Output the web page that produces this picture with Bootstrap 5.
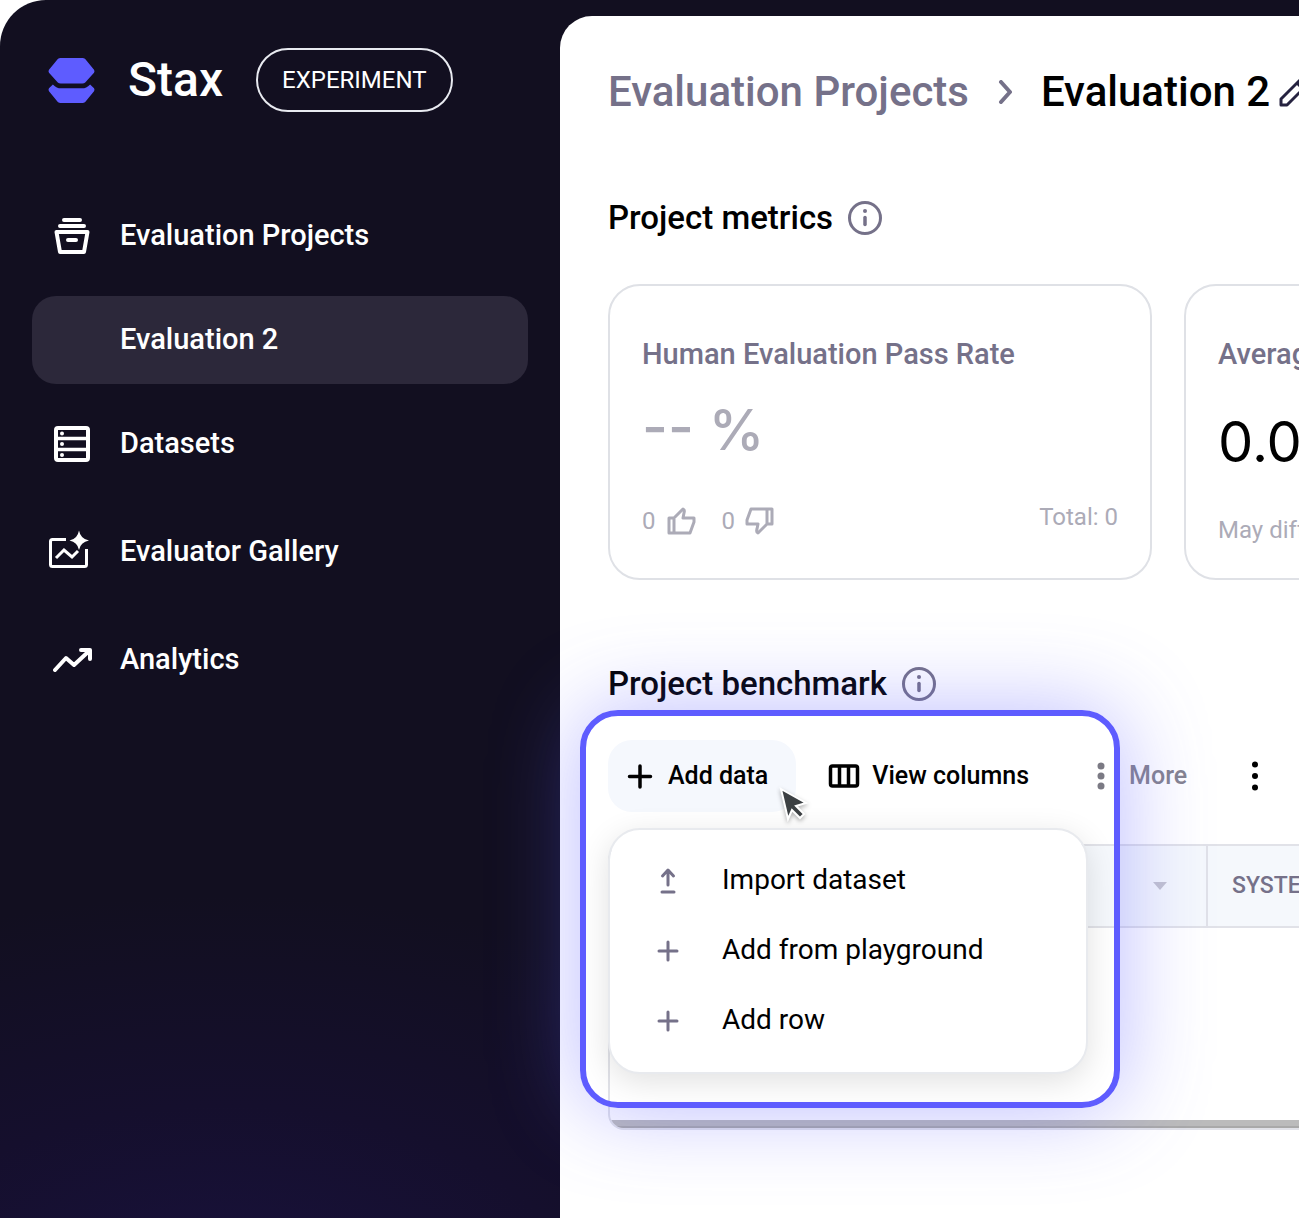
<!DOCTYPE html>
<html lang="en">
<head>
<meta charset="utf-8">
<meta name="viewport" content="width=device-width, initial-scale=1">
<title>Stax</title>
<link href="https://cdn.jsdelivr.net/npm/bootstrap@5.3.0/dist/css/bootstrap.min.css" rel="stylesheet">
<style>
  :root { --ink: #120f20; --muted: #757189; --faint: #acabb7; --accent: #5e5cff; --line: #dfe1e6; }
  body { font-family: Roboto, "Liberation Sans", sans-serif; color: #000; background: #fff; overflow-x: hidden; }
  svg { display: block; flex: none; }
  .app-shell { min-height: 100vh; background: var(--ink); border-top-left-radius: 46px; overflow: hidden; }
  .side-bar { width: 560px; padding: 48px 32px; color: #fff;
    background: radial-gradient(ellipse 720px 420px at 40% 108%, #19123e 0%, #150f2d 50%, rgba(18, 15, 32, 0) 100%); }
  .brand-row { height: 64px; margin: 0 16px 80px; gap: 33px; }
  .brand-name { font-size: 48px; line-height: 64px; font-weight: 500; }
  .stage-pill { height: 64px; padding: 0 24px; border: 2px solid #e8eaf0; font-size: 24px; font-weight: 400; line-height: 60px; }
  .side-link { height: 88px; padding: 0 16px; gap: 24px; border-radius: 24px; color: #fff; font-size: 29px; font-weight: 500; text-decoration: none; }
  .side-link.active { background: #2c283a; }
  .side-icon { width: 48px; }
  .nav-projects { gap: 16px; margin-bottom: 20px; }
  .nav-tools { gap: 20px; }
  .main-panel { margin-top: 16px; padding: 52px 0 88px 48px; background: #fff; border-top-left-radius: 32px; min-width: 0; }
  .crumbs { font-size: 42px; line-height: 48px; font-weight: 500; gap: 29px; margin-bottom: 82px; white-space: nowrap; }
  .crumbs a { color: var(--muted); text-decoration: none; }
  .section-title { font-size: 33px; line-height: 40px; font-weight: 500; margin: 0; }
  .section-head { gap: 14px; }
  .metric-row { gap: 32px; margin: 46px 0 84px; }
  .metric-card { flex: 0 0 544px; height: 296px; padding: 48px 32px 37px; border: 2px solid var(--line); border-radius: 32px; white-space: nowrap; }
  .metric-name { font-size: 29px; line-height: 40px; font-weight: 500; color: var(--muted); margin: 0; }
  .metric-value { font-family: Inter, Roboto, sans-serif; font-size: 56px; line-height: 64px; font-weight: 400; margin-top: 36px; }
  .metric-value.empty { margin-top: 24px; font-weight: 500; color: var(--faint); }
  .metric-foot { font-size: 24px; line-height: 32px; color: var(--faint); }
  .toolbar-zone { margin: 36px 0 32px; }
  .tool-row { gap: 16px; }
  .tool-btn { height: 72px; padding: 0 28px 0 16px; gap: 12px; border: 0; border-radius: 24px; font-size: 25px; font-weight: 500; line-height: 32px; color: #000; white-space: nowrap; }
  .tool-btn.pressed { background: #f5f8fd; }
  .tool-btn.quiet { padding: 0 20px 0 12px; color: #85838f; }
  .add-menu { display: block; top: 88px; left: 0; width: 480px; padding: 15px 0 17px; border: 2px solid #e8eaee; border-radius: 32px; box-shadow: 0 8px 32px rgba(0, 0, 0, .12); z-index: 3; }
  .add-menu .dropdown-item { height: 70px; padding: 0 44px; gap: 40px; font-size: 28px; color: #000; }
  .focus-frame { top: -30px; left: -28px; width: 540px; height: 398px; border: 6px solid var(--accent); border-radius: 38px; box-shadow: 0 0 88px rgba(94, 92, 255, .42); z-index: 4; pointer-events: none; }
  .pointer { top: 45px; left: 168px; z-index: 5; }
  .data-grid { width: 1000px; border: 2px solid #e1e2e8; border-radius: 16px; overflow: hidden; }
  .data-grid table { table-layout: fixed; margin: 0; border-collapse: separate; border-spacing: 0; }
  .data-grid th { height: 82px; padding: 0 24px; background: #f5f8fc; border-bottom: 2px solid #e1e2e8; color: var(--muted); font-size: 23px; font-weight: 500; vertical-align: middle; white-space: nowrap; }
  .data-grid th:first-child { width: 598px; padding-right: 38px; border-right: 2px solid #e1e2e8; }
  .data-grid td { height: 192px; border: 0; padding: 0; }
  .scroll-bar { height: 8px; background: #bbb; border-bottom: 2px solid #a9a9a9; }
</style>
</head>
<body>
<div class="app-shell d-flex">
  <aside class="side-bar flex-shrink-0">
    <div class="brand-row d-flex align-items-center">
      <svg width="47" height="47" viewBox="0 0 48 48" fill="#5e5cff"><path d="M13 1h22q2 0 3 1l9 11q1 1.500 0 3L38 26q-1 1-3 1H13q-2 0-3-1L1 16q-1-1.500 0-3L10 2q1-1 3-1zM5 28q4 4 8 4h22q4 0 8-4l4 4q1 1.500 0 3L38 46q-1 1-3 1H13q-2 0-3-1L1 35q-1-1.500 0-3z"/></svg>
      <span class="brand-name">Stax</span>
      <span class="stage-pill rounded-pill">EXPERIMENT</span>
    </div>
    <nav aria-label="Main">
      <div class="nav-projects d-flex flex-column">
        <a class="side-link d-flex align-items-center" href="#"><span class="side-icon d-flex justify-content-center">
          <svg width="36" height="36" viewBox="0 0 36 36" fill="none" stroke="#fff" stroke-width="4" stroke-linecap="round" stroke-linejoin="round"><path d="M10 2h16M6 8h24M2.500 14h31L30 34H6zM14 22h8"/></svg></span>Evaluation Projects</a>
        <a class="side-link active d-flex align-items-center" href="#" aria-current="page"><span class="side-icon"></span>Evaluation 2</a>
        <a class="side-link d-flex align-items-center" href="#"><span class="side-icon d-flex justify-content-center">
          <svg width="36" height="36" viewBox="0 0 36 36" fill="none" stroke="#fff" stroke-width="4"><rect x="2" y="2" width="32" height="32" rx="2"/><path d="M3 12.500h30M3 23.500h30" stroke-width="3.500"/><g fill="#fff" stroke="none"><circle cx="8" cy="7.500" r="2"/><circle cx="8" cy="18" r="2"/><circle cx="8" cy="29" r="2"/></g></svg></span>Datasets</a>
      </div>
      <div class="nav-tools d-flex flex-column">
        <a class="side-link d-flex align-items-center" href="#"><span class="side-icon">
          <svg width="48" height="48" viewBox="0 0 48 48" fill="none" stroke="#fff" stroke-width="3"><path d="M18 11.500H4.500q-2 0-2 2v23q0 2 2 2h32q2 0 2-2V21M8 30l8-8 8 7 6-6" stroke-linejoin="miter"/><path d="M31 2.500q1.500 8.500 10 10-8.500 1.500-10 9.500-1.500-8-9.500-9.500 8-1.500 9.500-10z" fill="#fff" stroke="none"/></svg></span>Evaluator Gallery</a>
        <a class="side-link d-flex align-items-center" href="#"><span class="side-icon d-flex justify-content-center">
          <svg width="40" height="24" viewBox="0 0 40 24" fill="none" stroke="#fff" stroke-width="4" stroke-linecap="round" stroke-linejoin="round"><path d="M3 22l11-12 8 7L36 4M29 2h9v9"/></svg></span>Analytics</a>
      </div>
    </nav>
  </aside>

  <main class="main-panel flex-grow-1">
    <nav class="crumbs d-flex align-items-center" aria-label="Breadcrumb">
      <a href="#">Evaluation Projects</a>
      <svg width="14" height="24" viewBox="0 0 14 24" fill="none" stroke="#757189" stroke-width="4" stroke-linecap="round" stroke-linejoin="round"><path d="M3 2l9 10-9 10"/></svg>
      <span class="d-flex align-items-center gap-2">Evaluation 2
        <svg width="32" height="32" viewBox="0 0 32 32" fill="none" stroke="#262340" stroke-width="3" stroke-linejoin="round"><path d="M3 29v-6L23 3l6 6L9 29zM19 7l6 6"/></svg></span>
    </nav>

    <div class="section-head d-flex align-items-center">
      <h2 class="section-title">Project metrics</h2>
      <svg width="36" height="36" viewBox="0 0 36 36"><circle cx="18" cy="18" r="15.500" fill="none" stroke="#757189" stroke-width="3"/><circle cx="18" cy="11" r="2" fill="#757189"/><path d="M18 17.500v7" stroke="#757189" stroke-width="3.500" stroke-linecap="round"/></svg>
    </div>
    <div class="metric-row d-flex">
      <section class="metric-card d-flex flex-column">
        <h3 class="metric-name">Human Evaluation Pass Rate</h3>
        <div class="metric-value empty">-- %</div>
        <div class="metric-foot d-flex align-items-center mt-auto">
          <span>0</span>
          <svg class="ms-2 me-4" width="34" height="34" viewBox="0 0 34 34" fill="none" stroke="#acabb7" stroke-width="3" stroke-linejoin="round"><path d="M5 14h5v15H5zM10 14l9-9q2 1 1 4l-1 5h11v4l-4 11H10"/></svg>
          <span>0</span>
          <svg class="ms-2" width="34" height="34" viewBox="0 0 34 34" fill="none" stroke="#acabb7" stroke-width="3" stroke-linejoin="round"><path d="M29 20h-5V5h5zM24 20l-9 9q-2-1-1-4l1-5H4v-4L8 5h16"/></svg>
          <span class="ms-auto mb-2">Total: 0</span>
        </div>
      </section>
      <section class="metric-card">
        <h3 class="metric-name">Average Latency</h3>
        <div class="metric-value">0.00</div>
        <div class="metric-foot mt-4 pt-3">May differ</div>
      </section>
    </div>

    <div class="section-head d-flex align-items-center">
      <h2 class="section-title">Project benchmark</h2>
      <svg width="36" height="36" viewBox="0 0 36 36"><circle cx="18" cy="18" r="15.500" fill="none" stroke="#757189" stroke-width="3"/><circle cx="18" cy="11" r="2" fill="#757189"/><path d="M18 17.500v7" stroke="#757189" stroke-width="3.500" stroke-linecap="round"/></svg>
    </div>
    <div class="toolbar-zone position-relative">
      <div class="tool-row d-flex align-items-center">
        <button type="button" class="tool-btn pressed d-flex align-items-center" aria-expanded="true">
          <svg width="32" height="32" viewBox="0 0 32 32" stroke="#000" stroke-width="3.500" stroke-linecap="round"><path d="M16 6v21M5.500 16.500h21"/></svg>Add data</button>
        <button type="button" class="tool-btn bg-transparent d-flex align-items-center">
          <svg width="32" height="32" viewBox="0 0 32 32" fill="none" stroke="#000" stroke-width="3.500"><rect x="2.500" y="6" width="27" height="20" rx="2"/><path d="M11.500 6v20M20.500 6v20"/></svg>View columns</button>
        <button type="button" class="tool-btn quiet bg-transparent d-flex align-items-center">
          <svg width="32" height="32" viewBox="0 0 32 32" fill="#7b7a84"><circle cx="16" cy="6" r="3.500"/><circle cx="16" cy="16" r="3.500"/><circle cx="16" cy="26" r="3.500"/></svg>More</button>
        <button type="button" class="tool-btn bg-transparent d-flex align-items-center" aria-label="Options">
          <svg width="32" height="32" viewBox="0 0 32 32"><circle cx="16" cy="4.500" r="3"/><circle cx="16" cy="16" r="3"/><circle cx="16" cy="27.500" r="3"/></svg></button>
      </div>
      <div class="dropdown-menu add-menu">
        <a class="dropdown-item d-flex align-items-center" href="#"><svg width="28" height="28" viewBox="0 0 28 28" fill="none" stroke="#757189" stroke-width="3" stroke-linecap="round" stroke-linejoin="round"><path d="M14 19V5M8.500 10L14 4l5.500 6M8 26h12"/></svg>Import dataset</a>
        <a class="dropdown-item d-flex align-items-center" href="#"><svg width="28" height="28" viewBox="0 0 28 28" stroke="#757189" stroke-width="3" stroke-linecap="round"><path d="M14 6v18M5 15h18"/></svg>Add from playground</a>
        <a class="dropdown-item d-flex align-items-center" href="#"><svg width="28" height="28" viewBox="0 0 28 28" stroke="#757189" stroke-width="3" stroke-linecap="round"><path d="M14 6v18M5 15h18"/></svg>Add row</a>
      </div>
      <div class="focus-frame position-absolute"></div>
      <svg class="pointer position-absolute" width="36" height="42" viewBox="0 0 36 42"><path d="M5 4l25 14-10 3 8 8-4 4-8-8-4 9z" fill="#3c4043" stroke="#fff" stroke-width="2" style="filter:drop-shadow(0 2px 2px rgba(0,0,0,.3))"/></svg>
    </div>
    <div class="data-grid">
      <table class="table">
        <thead><tr><th scope="col"><svg class="ms-auto" width="16" height="10" viewBox="0 0 16 10" role="img" aria-label="Sort"><path d="M1 1h14L8 9z" fill="#c4c4cf"/></svg></th><th scope="col">SYSTEM PROMPT</th></tr></thead>
        <tbody><tr><td></td><td></td></tr></tbody>
      </table>
      <div class="scroll-bar"></div>
    </div>
  </main>
</div>
<script src="https://cdn.jsdelivr.net/npm/bootstrap@5.3.0/dist/js/bootstrap.bundle.min.js"></script>
</body>
</html>
